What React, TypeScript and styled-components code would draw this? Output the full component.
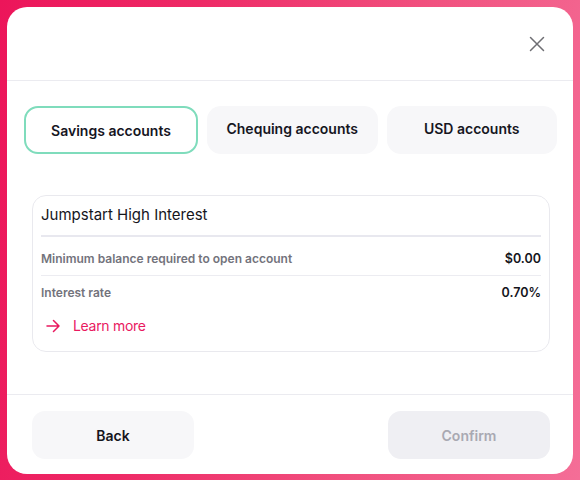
import React, { useState } from "react";
import styled, { createGlobalStyle } from "styled-components";

const GlobalStyle = createGlobalStyle`
  html, body {
    margin: 0;
    padding: 0;
  }
  body {
    font-family: Inter, "Noto Sans", "Liberation Sans", sans-serif;
    background: linear-gradient(100deg, #ec155a 0%, #ee2a66 30%, #f1517f 65%, #f46e97 100%);
    min-height: 480px;
  }
`;

const Page = styled.div`
  padding: 7px;
  box-sizing: border-box;
  height: 480px;
`;

const Modal = styled.div`
  width: 566px;
  height: 467px;
  background: #fff;
  border-radius: 20px;
  display: flex;
  flex-direction: column;
  overflow: hidden;
`;

const Header = styled.div`
  height: 73px;
  display: flex;
  align-items: center;
  justify-content: flex-end;
  padding-right: 28px;
  border-bottom: 1px solid #ebebf0;
  flex-shrink: 0;
`;

const CloseButton = styled.button`
  width: 16px;
  height: 16px;
  padding: 0;
  border: none;
  background: none;
  display: flex;
  align-items: center;
  justify-content: center;
  cursor: pointer;
`;

const Body = styled.div`
  flex: 1;
  padding: 25px 16px 0 17px;
  border-bottom: 1px solid #ebebf0;
`;

const Tabs = styled.div`
  display: grid;
  grid-template-columns: 174px 1fr 1fr;
  gap: 9px;
`;

const Tab = styled.button<{ $active?: boolean }>`
  height: 48px;
  border-radius: 14px;
  border: ${(p) => (p.$active ? "2px solid #7fdcbc" : "2px solid transparent")};
  background: ${(p) => (p.$active ? "#fff" : "#f7f7f9")};
  font-family: inherit;
  font-size: 14px;
  font-weight: 600;
  color: #16161f;
  padding: ${(p) => (p.$active ? "1px 0 0" : "0 0 4px")};
  cursor: pointer;
`;

const Card = styled.div`
  margin: 41px 7px 0 8px;
  border: 1px solid #e9e9ee;
  border-radius: 14px;
  padding: 9px 8px 17px 8px;
`;

const Title = styled.div`
  font-size: 15px;
  color: #15151c;
  padding-bottom: 10px;
  border-bottom: 2px solid #e8e8ef;
  line-height: 20px;
`;

const Row = styled.div<{ $first?: boolean }>`
  display: flex;
  justify-content: space-between;
  align-items: center;
  height: ${(p) => (p.$first ? "39px" : "33px")};
  padding-top: ${(p) => (p.$first ? "5px" : "0")};
  box-sizing: border-box;
  border-bottom: ${(p) => (p.$first ? "1px solid #ececf1" : "none")};
  font-size: 12px;
`;

const RowLabel = styled.span`
  color: #73737c;
  font-weight: 600;
`;

const RowValue = styled.span`
  color: #15151c;
  font-weight: 600;
  font-size: 12.5px;
`;

const LearnMore = styled.a`
  display: flex;
  align-items: center;
  gap: 13px;
  color: #e9195f;
  font-size: 14px;
  padding-left: 5px;
  margin-top: 8px;
  text-decoration: none;
  letter-spacing: -0.3px;
  cursor: pointer;
`;

const Footer = styled.div`
  display: flex;
  justify-content: space-between;
  padding: 16px 23px 15px 25px;
`;

const FooterButton = styled.button<{ $disabled?: boolean }>`
  width: 162px;
  height: 48px;
  border: none;
  border-radius: 13px;
  background: ${(p) => (p.$disabled ? "#efeff3" : "#f7f7f9")};
  color: ${(p) => (p.$disabled ? "#a9a9b2" : "#15151c")};
  font-family: inherit;
  font-size: 14px;
  font-weight: 600;
  padding-top: 2px;
  cursor: ${(p) => (p.$disabled ? "default" : "pointer")};
`;

const CloseIcon = () => (
  <svg width="16" height="16" viewBox="0 0 16 16" fill="none">
    <path d="M1.5 1.5L14.5 14.5M14.5 1.5L1.5 14.5" stroke="#6e6e73" strokeWidth="1.5" strokeLinecap="round" />
  </svg>
);

const ArrowIcon = () => (
  <svg width="14" height="14" viewBox="0 0 14 14" fill="none">
    <path d="M1 7H13M7.5 1.5L13 7L7.5 12.5" stroke="#e9195f" strokeWidth="1.5" strokeLinecap="round" strokeLinejoin="round" />
  </svg>
);

const tabs = ["Savings accounts", "Chequing accounts", "USD accounts"];

export default function App() {
  const [active, setActive] = useState(0);

  return (
    <>
      <GlobalStyle />
      <Page>
        <Modal>
          <Header>
            <CloseButton aria-label="Close">
              <CloseIcon />
            </CloseButton>
          </Header>
          <Body>
            <Tabs>
              {tabs.map((t, i) => (
                <Tab key={t} $active={i === active} onClick={() => setActive(i)}>
                  {t}
                </Tab>
              ))}
            </Tabs>
            <Card>
              <Title>Jumpstart High Interest</Title>
              <Row $first>
                <RowLabel>Minimum balance required to open account</RowLabel>
                <RowValue>$0.00</RowValue>
              </Row>
              <Row>
                <RowLabel>Interest rate</RowLabel>
                <RowValue>0.70%</RowValue>
              </Row>
              <LearnMore>
                <ArrowIcon />
                Learn more
              </LearnMore>
            </Card>
          </Body>
          <Footer>
            <FooterButton>Back</FooterButton>
            <FooterButton $disabled>Confirm</FooterButton>
          </Footer>
        </Modal>
      </Page>
    </>
  );
}
